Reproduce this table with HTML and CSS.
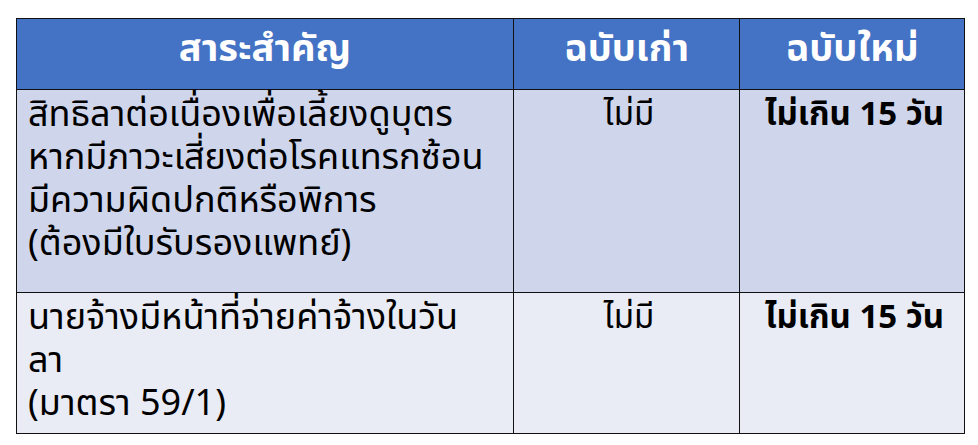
FILE: index.html
```html
<!DOCTYPE html>
<html lang="th">
<head>
<meta charset="utf-8">
<link rel="stylesheet" href="styles.css">
</head>
<body>
<table class="cmp">
  <colgroup>
    <col class="c1"><col class="c2"><col class="c3">
  </colgroup>
  <thead>
    <tr class="head">
      <th>สาระสำคัญ</th>
      <th>ฉบับเก่า</th>
      <th>ฉบับใหม่</th>
    </tr>
  </thead>
  <tbody>
    <tr class="r1">
      <td class="topic">สิทธิลาต่อเนื่องเพื่อเลี้ยงดูบุตร<br>หากมีภาวะเสี่ยงต่อโรคแทรกซ้อน<br>มีความผิดปกติหรือพิการ<br>(ต้องมีใบรับรองแพทย์)</td>
      <td class="mid">ไม่มี</td>
      <td class="mid strong">ไม่เกิน 15 วัน</td>
    </tr>
    <tr class="r2">
      <td class="topic">นายจ้างมีหน้าที่จ่ายค่าจ้างในวัน<br>ลา<br>(มาตรา 59/1)</td>
      <td class="mid">ไม่มี</td>
      <td class="mid strong">ไม่เกิน 15 วัน</td>
    </tr>
  </tbody>
</table>
</body>
</html>
```
FILE: styles.css
```css
html, body {
  margin: 0;
  padding: 0;
  background: #ffffff;
}
body {
  padding: 18px 0 0 16px;
  font-family: "Noto Sans Thai", "Noto Sans", sans-serif;
}
.cmp {
  border-collapse: collapse;
  width: 948px;
  table-layout: fixed;
}
.c1 { width: 497px; }
.c2 { width: 226px; }
.c3 { width: 225px; }
.cmp th, .cmp td {
  border: 1.5px solid #111;
  vertical-align: top;
}
.head th {
  background: #4472c4;
  color: #ffffff;
  font-size: 38px;
  line-height: 50px;
  font-weight: bold;
  height: 71px;
  vertical-align: middle;
  text-align: center;
  padding: 0 4px 8px;
  box-sizing: border-box;
}
.r1 td { background: #cfd5ea; height: 203px; box-sizing: border-box; }
.r2 td { background: #e9ebf5; height: 141px; box-sizing: border-box; }
.cmp td {
  line-height: 43px;
  color: #000;
  padding: 4px 6px 0 11px;
}
.topic { font-size: 36px; }
.mid { text-align: center; font-size: 33px; }
.strong { font-weight: bold; }
```
